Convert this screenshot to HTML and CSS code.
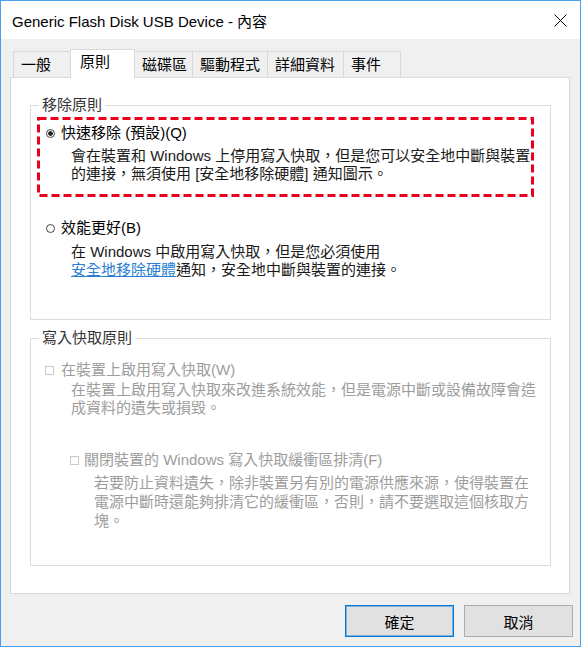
FILE: index.html
```html
<!DOCTYPE html>
<html lang="zh-Hant">
<head>
    <meta charset="UTF-8">
    <meta name="viewport" content="width=device-width, initial-scale=1.0">
    <title>Generic Flash Disk USB Device - 內容</title>
    <link rel="stylesheet" href="styles.css">
</head>
<body>
    <div class="window">
        <div class="titlebar">
            <span class="title">Generic Flash Disk USB Device - 內容</span>
            <svg class="close" width="13" height="13" viewBox="0 0 13 13">
                <path d="M0.5 0.5L12.5 12.5M12.5 0.5L0.5 12.5" stroke="#000" stroke-width="1" fill="none"/>
            </svg>
        </div>

        <div class="tabs">
            <div class="tab tab-general">一般</div>
            <div class="tab tab-policy active">原則</div>
            <div class="tab tab-volume">磁碟區</div>
            <div class="tab tab-driver">驅動程式</div>
            <div class="tab tab-details">詳細資料</div>
            <div class="tab tab-events">事件</div>
        </div>

        <div class="panel">
            <fieldset class="group removal">
                <legend>移除原則</legend>
                <div class="option quick">
                    <div class="opt-label"><span class="radio checked"></span>快速移除 (預設)(Q)</div>
                    <div class="opt-desc">會在裝置和 Windows 上停用寫入快取，但是您可以安全地中斷與裝置<br>的連接，無須使用 [安全地移除硬體] 通知圖示。</div>
                    <svg class="highlight"><rect></rect></svg>
                </div>
                <div class="option better">
                    <div class="opt-label"><span class="radio"></span>效能更好(B)</div>
                    <div class="opt-desc">在 Windows 中啟用寫入快取，但是您必須使用<br><a href="#" class="link">安全地移除硬體</a>通知，安全地中斷與裝置的連接。</div>
                </div>
            </fieldset>

            <fieldset class="group cache">
                <legend>寫入快取原則</legend>
                <div class="option disabled">
                    <div class="opt-label"><span class="check"></span>在裝置上啟用寫入快取(W)</div>
                    <div class="opt-desc">在裝置上啟用寫入快取來改進系統效能，但是電源中斷或設備故障會造<br>成資料的遺失或損毀。</div>
                </div>
                <div class="option disabled nested">
                    <div class="opt-label"><span class="check"></span>關閉裝置的 Windows 寫入快取緩衝區排清(F)</div>
                    <div class="opt-desc">若要防止資料遺失，除非裝置另有別的電源供應來源，使得裝置在<br>電源中斷時還能夠排清它的緩衝區，否則，請不要選取這個核取方<br>塊。</div>
                </div>
            </fieldset>
        </div>

        <div class="buttons">
            <button class="btn default">確定</button>
            <button class="btn">取消</button>
        </div>
    </div>
</body>
</html>
```

FILE: styles.css
```css
body {
    margin: 0;
    font-family: "Liberation Sans", "Noto Sans CJK TC", sans-serif;
    font-size: 15px;
    color: #000;
    background: #fff;
}

.window {
    width: 581px;
    height: 647px;
    box-sizing: border-box;
    border: 1px solid #4a9fef;
    background: #f0f0f0;
    display: flex;
    flex-direction: column;
}

/* title bar */
.titlebar {
    height: 38px;
    background: #fff;
    display: flex;
    align-items: center;
    justify-content: space-between;
    padding-left: 11px;
    flex-shrink: 0;
}

.close {
    margin-right: 13px;
}

/* tabs */
.tabs {
    display: flex;
    align-items: flex-end;
    height: 28px;
    margin-top: 10px;
    padding-left: 12px;
    flex-shrink: 0;
}

.tab {
    box-sizing: border-box;
    height: 26px;
    padding: 4px 0 0 7px;
    line-height: 18px;
    border: 1px solid #d9d9d9;
    border-bottom: none;
    background: #f0f0f0;
    margin-left: -1px;
    white-space: nowrap;
}

.tab:first-child {
    margin-left: 0;
}

.tab.active {
    height: 29px;
    margin-bottom: -1px;
    padding: 3px 0 0 9px;
    background: #fff;
    position: relative;
    z-index: 1;
}

.tab-general { width: 58px; }
.tab-policy { width: 65px; }
.tab-volume { width: 59px; }
.tab-driver { width: 76px; }
.tab-details { width: 77px; }
.tab-events { width: 58px; }

/* main page */
.panel {
    box-sizing: border-box;
    width: 560px;
    height: 517px;
    margin-left: 9px;
    padding: 18px 18px 0 19px;
    background: #fff;
    border: 1px solid #d9d9d9;
    flex-shrink: 0;
}

.group {
    margin: 0;
    min-width: 0;
    border: 1px solid #dcdcdc;
}

.group legend {
    margin-left: -6px;
    padding: 0 3px;
    line-height: 18px;
    color: #333;
}

.removal {
    padding: 10px 0 40px 14px;
}

.cache {
    margin-top: 9px;
    padding: 14px 0 35px 14px;
}

.option {
    position: relative;
}

.opt-label {
    display: flex;
    align-items: center;
    line-height: 18px;
    white-space: nowrap;
}

.opt-desc {
    margin-left: 26px;
    line-height: 18px;
    white-space: nowrap;
    color: #1a1a1a;
}

.quick .opt-desc {
    margin-top: 5px;
}

.better {
    margin-top: 36px;
}

.better .opt-desc {
    margin-top: 6px;
}

.link {
    color: #2a7fd4;
    text-decoration: underline;
}

.radio {
    box-sizing: border-box;
    width: 9px;
    height: 9px;
    margin: 1px 6px 0 1px;
    border: 1px solid #444;
    border-radius: 50%;
    background: #fff;
}

.radio.checked {
    background: radial-gradient(circle, #222 0, #222 2px, #fff 2.6px);
}

.check {
    box-sizing: border-box;
    width: 9px;
    height: 9px;
    margin: 1px 7px 0 0;
    border: 1px solid #c9c9c9;
    background: #fff;
}

.disabled .opt-label,
.disabled .opt-desc {
    color: #9d9d9d;
}

.disabled .opt-desc {
    margin-top: 2px;
}

.nested {
    margin-top: 34px;
    padding-left: 25px;
}

.nested .check {
    margin-right: 5px;
}

.nested .opt-desc {
    margin-left: 24px;
    margin-top: 4px;
    line-height: 19px;
}

/* red dashed mark around the first option */
.highlight {
    position: absolute;
    left: -8px;
    right: 16px;
    top: -7px;
    bottom: -14px;
    width: calc(100% - 8px);
    height: calc(100% + 21px);
    pointer-events: none;
}

.highlight rect {
    x: 1.5px;
    y: 1.5px;
    width: calc(100% - 3px);
    height: calc(100% - 3px);
    fill: none;
    stroke: #e8001c;
    stroke-width: 3;
    stroke-dasharray: 8 4;
}

/* bottom buttons */
.buttons {
    display: flex;
    justify-content: flex-end;
    gap: 10px;
    padding-right: 7px;
    margin-top: 11px;
}

.btn {
    box-sizing: border-box;
    width: 109px;
    height: 32px;
    font-family: inherit;
    font-size: 15px;
    color: #000;
    background: #e1e1e1;
    border: 1px solid #adadad;
    padding: 0;
}

.btn.default {
    border-color: #0078d7;
    box-shadow: inset 0 0 0 1px rgba(0, 120, 215, 0.45);
}
```
